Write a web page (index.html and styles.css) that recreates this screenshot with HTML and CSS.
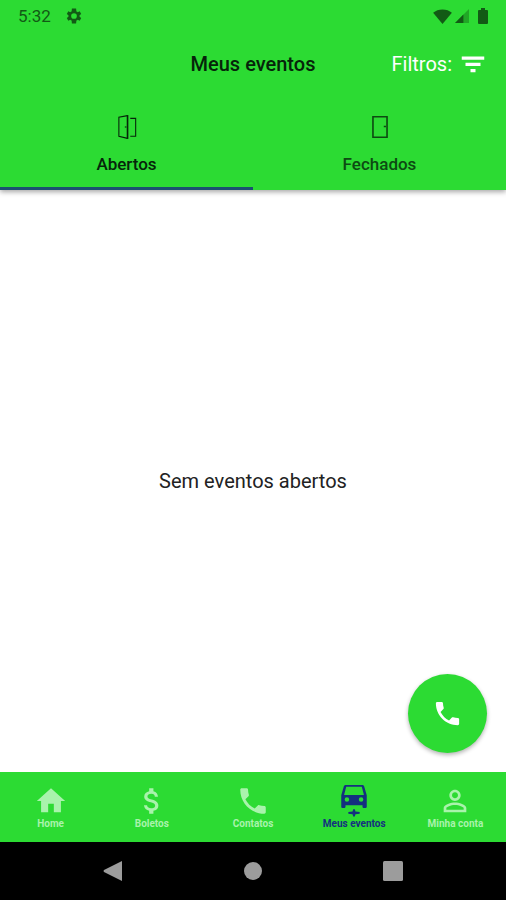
FILE: index.html
```html
<!DOCTYPE html>
<html lang="pt-BR">
  <head>
    <meta charset="UTF-8" />
    <meta name="viewport" content="width=device-width, initial-scale=1.0" />
    <title>Meus eventos</title>
    <link rel="stylesheet" href="styles.css">
  </head>
  <body>
    <header class="header">
      <div class="status">
        <span class="time">5:32</span>
        <svg class="gear" viewBox="0 0 24 24">
          <path fill-rule="evenodd" d="M19.4 13c.1-.6.1-1.400 0-2l2.200-1.700-2-3.500-2.600 1.100c-.5-.4-1.100-.8-1.800-1L14.800 2h-5.600l-.4 3.900c-.7.2-1.300.6-1.800 1L4.400 5.800l-2 3.500L4.600 11c-.1.6-.1 1.400 0 2l-2.200 1.700 2 3.500L7 17.100c.5.4 1.100.8 1.800 1l.4 3.900h5.600l.4-3.900c.7-.2 1.300-.6 1.800-1l2.600 1.100 2-3.500zM12 15.800a3.800 3.800 0 1 1 0-7.600 3.800 3.800 0 0 1 0 7.600z" />
        </svg>
        <svg class="wifi" viewBox="0 0 20 16">
          <path d="M0 4C5-.8 15-.8 20 4L10 16z" />
        </svg>
        <svg class="signal" viewBox="0 0 15 15">
          <path opacity=".4" d="M15 0v15H0z" />
          <path d="M9 6v9H0z" />
        </svg>
        <svg class="battery" viewBox="0 0 10 16">
          <path d="M3 0h4v2h2q1 0 1 1v12q0 1-1 1H1q-1 0-1-1V3q0-1 1-1h2z" />
        </svg>
      </div>
      <div class="appbar">
        <h1 class="title">Meus eventos</h1>
        <button class="filter" type="button">
          Filtros:
          <svg viewBox="0 0 24 24">
            <path d="M3 6h18v2.500H3zM6 11h12v2.500H6zM10 16h4v2.500h-4z" />
          </svg>
        </button>
      </div>
      <nav class="tabs">
        <button class="tab active" type="button">
          <svg viewBox="0 0 24 24">
            <path d="M12.500 1.500L4.500 3v17.500l8 2M15 4h5v16.500h-5" />
            <path class="thick" d="M12.500 1v22" />
            <path d="M10 12h1.500" />
          </svg>
          Abertos
        </button>
        <button class="tab" type="button">
          <svg viewBox="0 0 24 24">
            <path class="thick" d="M5.500 2.500h13v19h-13zM15.500 11.500h2" />
          </svg>
          Fechados
        </button>
      </nav>
    </header>

    <main class="content">
      <p class="empty">Sem eventos abertos</p>
      <button class="fab" type="button" aria-label="Ligar">
        <svg viewBox="0 0 24 24">
          <path d="M6.620 10.790c1.440 2.830 3.760 5.140 6.590 6.590l2.200-2.200c.27-.27.67-.36 1.020-.24 1.120.37 2.330.57 3.570.57.55 0 1 .45 1 1V20c0 .55-.45 1-1 1-9.390 0-17-7.610-17-17 0-.55.45-1 1-1h3.500c.55 0 1 .45 1 1 0 1.250.2 2.450.57 3.570.11.35.03.74-.25 1.020z" />
        </svg>
      </button>
    </main>

    <nav class="bottom-nav">
      <a class="item" href="#home">
        <svg viewBox="0 0 24 24">
          <path d="M10 20v-6h4v6h5v-8h3L12 3 2 12h3v8z" />
        </svg>
        Home
      </a>
      <a class="item" href="#boletos">
        <svg viewBox="0 0 24 24">
          <path d="M11.800 10.900c-2.270-.59-3-1.200-3-2.150 0-1.090 1.010-1.850 2.700-1.850 1.780 0 2.440.85 2.500 2.100h2.210c-.07-1.720-1.120-3.300-3.210-3.810V3h-3v2.160c-1.940.42-3.500 1.680-3.500 3.610 0 2.310 1.910 3.460 4.700 4.130 2.500.6 3 1.480 3 2.410 0 .69-.49 1.790-2.700 1.790-2.060 0-2.870-.92-2.980-2.100h-2.200c.12 2.190 1.760 3.420 3.680 3.830V21h3v-2.150c1.950-.37 3.500-1.500 3.500-3.550 0-2.840-2.430-3.810-4.700-4.400z" />
        </svg>
        Boletos
      </a>
      <a class="item" href="#contatos">
        <svg viewBox="0 0 24 24">
          <path d="M6.620 10.790c1.440 2.830 3.760 5.140 6.590 6.590l2.200-2.200c.27-.27.67-.36 1.020-.24 1.120.37 2.330.57 3.570.57.55 0 1 .45 1 1V20c0 .55-.45 1-1 1-9.390 0-17-7.610-17-17 0-.55.45-1 1-1h3.500c.55 0 1 .45 1 1 0 1.250.2 2.450.57 3.570.11.35.03.74-.25 1.020z" />
        </svg>
        Contatos
      </a>
      <a class="item current" href="#eventos">
        <svg viewBox="0 0 24 24">
          <path fill-rule="evenodd" d="M19.200 1.710C19 1.120 18.500.7 17.900.7H6.100c-.6 0-1.100.42-1.300 1.010L3 8v8c0 .55.45 1 1 1h1c.55 0 1-.45 1-1v-1h12v1c0 .55.45 1 1 1h1c.55 0 1-.45 1-1V8zM7 12.500a1.600 1.600 0 1 1 0-3.200 1.600 1.600 0 0 1 0 3.200zm10 0a1.600 1.600 0 1 1 0-3.200 1.600 1.600 0 0 1 0 3.200zM5 7.700l1.500-5.700h11L19 7.700z" />
          <path d="M8 19.800l3-.4.4-1.600h1.200l.4 1.600 3 .4v1.200l-3 .4-.4 1.600h-1.200l-.4-1.600-3-.4z" />
        </svg>
        Meus eventos
      </a>
      <a class="item" href="#conta">
        <svg viewBox="0 0 24 24">
          <path d="M12 5.900c1.160 0 2.100.94 2.100 2.100s-.94 2.100-2.100 2.100S9.900 9.160 9.900 8s.94-2.100 2.100-2.100m0 9c2.970 0 6.100 1.460 6.100 2.100v1.100H5.900V17c0-.64 3.130-2.100 6.100-2.100M12 4C9.790 4 8 5.790 8 8s1.790 4 4 4 4-1.790 4-4-1.790-4-4-4zm0 9c-2.670 0-8 1.340-8 4v3h16v-3c0-2.660-5.330-4-8-4z" />
        </svg>
        Minha conta
      </a>
    </nav>

    <div class="system-nav">
      <button type="button" aria-label="Voltar">
        <svg viewBox="0 0 20 20"><path d="M19 0v20L1 11q-1-1 0-2z" /></svg>
      </button>
      <button type="button" aria-label="Início">
        <svg viewBox="0 0 20 20"><circle cx="10" cy="10" r="9" /></svg>
      </button>
      <button type="button" aria-label="Recentes">
        <svg viewBox="0 0 20 20"><rect width="20" height="20" rx="1.500" /></svg>
      </button>
    </div>
  </body>
</html>
```
FILE: styles.css
```css
* {
  box-sizing: border-box;
}

body {
  display: flex;
  flex-direction: column;
  min-height: 100vh;
  margin: 0;
  background-color: #fff;
  font-family: Roboto, sans-serif;
}

button {
  padding: 0;
  border: none;
  background: none;
  font-family: inherit;
  cursor: pointer;
}

svg {
  display: block;
  fill: currentColor;
}

/* Header */

.header {
  background-color: #2cdb33;
  box-shadow: 0 2px 5px rgba(0, 0, 0, 0.35);
}

.status {
  display: flex;
  align-items: center;
  height: 32px;
  padding: 0 18px;
  color: #125a15;
}

.time {
  font-size: 17px;
}

.gear {
  width: 18px;
  height: 18px;
  margin-left: 14px;
}

.wifi {
  width: 19px;
  height: 15px;
  margin-left: auto;
}

.signal {
  width: 14px;
  height: 14px;
  margin: 0 9px 0 3px;
}

.battery {
  width: 10px;
  height: 16px;
}

.appbar {
  display: grid;
  grid-template-columns: 1fr auto 1fr;
  align-items: center;
  height: 64px;
  padding: 0 18px;
}

.title {
  grid-column: 2;
  margin: 0;
  color: #06240a;
  font-size: 20px;
  font-weight: 500;
}

.filter {
  display: flex;
  align-items: center;
  justify-self: end;
  gap: 6px;
  color: #fff;
  font-size: 20px;
}

.filter svg {
  width: 30px;
  height: 30px;
}

.tabs {
  display: flex;
}

.tab {
  display: flex;
  flex: 1;
  flex-direction: column;
  align-items: center;
  gap: 14px;
  height: 94px;
  padding-top: 18px;
  border-bottom: 3px solid transparent;
  color: #0d4a12;
  font-size: 17px;
  font-weight: 500;
}

.tab.active {
  border-bottom-color: #1b5070;
  color: #06240a;
}

.tab svg {
  width: 26px;
  height: 26px;
  fill: none;
  stroke: currentColor;
}

.tab .thick {
  stroke-width: 1.5;
}

/* Content */

.content {
  position: relative;
  display: flex;
  flex: 1;
  align-items: center;
  justify-content: center;
}

.empty {
  margin: 0;
  color: #222;
  font-size: 20px;
}

.fab {
  position: absolute;
  right: 19px;
  bottom: 19px;
  display: flex;
  align-items: center;
  justify-content: center;
  width: 79px;
  height: 79px;
  border-radius: 50%;
  background-color: #2cdb33;
  box-shadow: 0 2px 4px rgba(0, 0, 0, 0.3);
  color: #fff;
}

.fab svg {
  width: 31px;
  height: 31px;
}

/* Bottom navigation */

.bottom-nav {
  display: flex;
  height: 70px;
  background-color: #2cdb33;
}

.item {
  display: flex;
  flex: 1;
  flex-direction: column;
  align-items: center;
  padding-top: 12px;
  color: #a9f3ac;
  font-size: 10px;
  font-weight: 700;
  line-height: 12px;
  text-decoration: none;
  white-space: nowrap;
}

.item svg {
  width: 34px;
  height: 34px;
}

.item.current {
  color: #14307f;
}

.system-nav {
  display: flex;
  height: 58px;
  padding: 0 43px;
  background-color: #000;
}

.system-nav button {
  display: flex;
  flex: 1;
  align-items: center;
  justify-content: center;
  color: #9c9c9c;
}

.system-nav svg {
  width: 20px;
  height: 20px;
}
```
